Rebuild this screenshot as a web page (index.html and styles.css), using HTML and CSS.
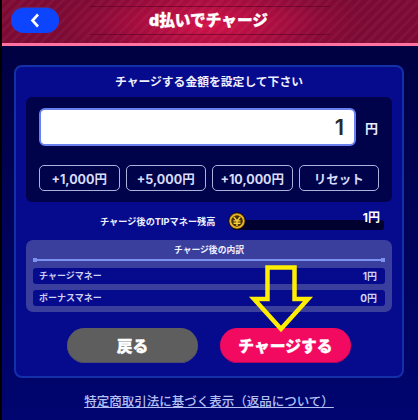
FILE: index.html
```html
<!DOCTYPE html>
<html lang="ja">
<head>
<meta charset="utf-8">
<title>d払いでチャージ</title>
<link rel="stylesheet" href="styles.css">
</head>
<body>
<div class="page">
  <header class="header">
    <button class="back" aria-label="戻る">
      <svg width="10" height="15" viewBox="0 0 10 15"><path d="M8 1.5 2.5 7.5 8 13.5" fill="none" stroke="#fff" stroke-width="2.6"/></svg>
    </button>
    <h1 class="title">d払いでチャージ</h1>
  </header>
  <main class="main">
    <section class="card">
      <h2 class="lead">チャージする金額を設定して下さい</h2>
      <div class="entry">
        <div class="input-row">
          <div class="input">1</div>
          <span class="unit">円</span>
        </div>
        <div class="chips">
          <button class="chip">+1,000円</button>
          <button class="chip">+5,000円</button>
          <button class="chip">+10,000円</button>
          <button class="chip">リセット</button>
        </div>
      </div>
      <div class="balance">
        <span class="balance-label">チャージ後のTIPマネー残高</span>
        <div class="meter">
          <span class="coin">
            <svg width="18" height="18" viewBox="0 0 18 18">
              <circle cx="9" cy="9" r="8.3" fill="#c98f10" stroke="#000" stroke-width=".8"/>
              <circle cx="9" cy="9" r="6.4" fill="#4a3000" stroke="#f0c030" stroke-width="1.2"/>
              <path d="M5.8 4.8 9 9l3.2-4.2M5.5 8.9h7M5.5 11.2h7M9 9v5" fill="none" stroke="#f6d040" stroke-width="1.4"/>
            </svg>
          </span>
          <span class="meter-value">1円</span>
        </div>
      </div>
      <div class="detail">
        <h3 class="detail-title">チャージ後の内訳</h3>
        <div class="rule"></div>
        <div class="row"><span>チャージマネー</span><span class="row-value">1円</span></div>
        <div class="row"><span>ボーナスマネー</span><span class="row-value">0円</span></div>
      </div>
      <div class="actions">
        <button class="action action-back">戻る</button>
        <button class="action action-go">チャージする</button>
      </div>
    </section>
    <a class="legal" href="#">特定商取引法に基づく表示（返品について）</a>
  </main>
  <svg class="arrow" width="66" height="72" viewBox="0 0 66 72">
    <path d="M19.5 4.5H46.5V36H60L33 66 6 36H19.5Z" fill="none" stroke="#ffee00" stroke-width="4.5"/>
  </svg>
</div>
</body>
</html>
```
FILE: styles.css
```css
* { box-sizing: border-box; }
html, body { margin: 0; padding: 0; background: #000; }
.page {
  position: relative;
  width: 416px;
  height: 420px;
  margin-left: 2px;
  overflow: hidden;
  font-family: Inter, "Noto Sans CJK JP", sans-serif;
  color: #fff;
  background: linear-gradient(#00003c, #000570);
}
button { font-family: inherit; cursor: pointer; }
.header {
  position: relative;
  height: 46px;
  display: flex;
  align-items: center;
  justify-content: center;
  border-bottom: 3px solid #ff72a2;
  background:
    repeating-linear-gradient(135deg, rgba(255,255,255,.035) 0 3px, transparent 3px 7px),
    radial-gradient(ellipse 150px 50px at 208px 24px, #d4124a, #8c0a38 75%, #7d0a34);
}
.header::before {
  content: "";
  position: absolute;
  left: 88px;
  right: 88px;
  top: 6px;
  height: 27px;
  border-top: 1px solid rgba(90, 0, 40, .6);
  border-bottom: 1px solid rgba(90, 0, 40, .6);
}
.back {
  position: absolute;
  left: 9px;
  top: 8px;
  width: 48px;
  height: 25px;
  border: 0;
  border-radius: 13px;
  background: #0d45ff;
  box-shadow: 0 -1px 0 #5a2a7a;
  display: flex;
  align-items: center;
  justify-content: center;
  padding: 0;
}
.title {
  position: relative;
  margin: 0 3px 2px 0;
  font-size: 15.7px;
  line-height: 24px;
  font-weight: 900;
  -webkit-text-stroke: .3px #fff;
}
.main {
  display: flex;
  flex-direction: column;
  padding: 19px 12px 0;
}
.card {
  width: 390px;
  height: 313px;
  padding: 0 10px;
  border: 2px solid #1430a8;
  border-radius: 8px;
  background: #060a8c;
}
.lead {
  margin: 0;
  height: 30px;
  font-size: 11.8px;
  line-height: 30px;
  font-weight: 700;
  text-align: center;
  color: #eef0ff;
}
.entry {
  height: 105px;
  padding: 11px 13px 0;
  border-radius: 6px;
  background: #00024a;
}
.input-row {
  display: flex;
  align-items: center;
  gap: 9px;
}
.input {
  width: 317px;
  height: 38px;
  padding-right: 10px;
  border: 2px solid #6a80ee;
  border-radius: 6px;
  background: #fff;
  color: #2a2a2a;
  font-size: 22px;
  font-weight: 600;
  line-height: 34px;
  text-align: right;
}
.unit { font-size: 13px; font-weight: 700; color: #e8ecff; }
.chips {
  display: flex;
  gap: 6px;
  margin-top: 19px;
}
.chip {
  width: 80.5px;
  height: 26px;
  padding: 0;
  border: 1.5px solid #a8b4dc;
  border-radius: 5px;
  background: #00024a;
  color: #d8dcf8;
  font-size: 12.5px;
  font-weight: 700;
}
.balance {
  display: flex;
  height: 38px;
}
.balance-label {
  flex: none;
  width: 207px;
  padding: 13px 0 0 74px;
  font-size: 9.2px;
  line-height: 14px;
  font-weight: 700;
  white-space: nowrap;
  color: #eef0ff;
}
.meter {
  position: relative;
  width: 151px;
  height: 10px;
  margin-top: 18px;
  background: #00012e;
  border-radius: 0 3px 3px 0;
}
.coin { position: absolute; left: -5px; top: -8px; line-height: 0; }
.meter-value {
  position: absolute;
  right: 4px;
  top: -9px;
  font-size: 12px;
  line-height: 14px;
  font-weight: 700;
}
.detail {
  height: 72px;
  padding: 0 7px;
  border-radius: 7px;
  background: #3a3f9e;
}
.detail-title {
  margin: 0;
  height: 15px;
  font-size: 8.8px;
  line-height: 19px;
  font-weight: 700;
  text-align: center;
  color: #eef0ff;
}
.rule {
  position: relative;
  height: 2px;
  margin: 4px 0 7px;
  background: #7d92ee;
}
.rule::before, .rule::after {
  content: "";
  position: absolute;
  top: -1px;
  width: 4px;
  height: 4px;
  background: #7d92ee;
}
.rule::before { left: 0; }
.rule::after { right: 0; }
.row {
  display: flex;
  justify-content: space-between;
  align-items: center;
  height: 15.5px;
  margin-bottom: 6.5px;
  padding: 0 8px 0 6px;
  border-radius: 3px;
  background: #060a8c;
  font-size: 9px;
  font-weight: 700;
  color: #ccd2f4;
}
.row-value { font-size: 10px; }
.actions {
  display: flex;
  justify-content: center;
  gap: 22px;
  margin-top: 16px;
}
.action {
  width: 131px;
  height: 35px;
  padding: 0;
  border: 0;
  border-radius: 18px;
  color: #fff;
  font-size: 15.8px;
  font-weight: 900;
  -webkit-text-stroke: .3px #fff;
}
.action-back { background: #5e5e5e; box-shadow: inset 0 -1px 0 #4c4c6c; }
.action-go { background: #f20a60; box-shadow: inset 0 -1px 0 #a80a60; }
.legal {
  width: 390px;
  margin-top: 15px;
  font-size: 12.5px;
  line-height: 18px;
  text-align: center;
  font-weight: 500;
  color: #b4c0f4;
  white-space: nowrap;
}
.arrow {
  position: absolute;
  left: 246px;
  top: 263px;
}
```
